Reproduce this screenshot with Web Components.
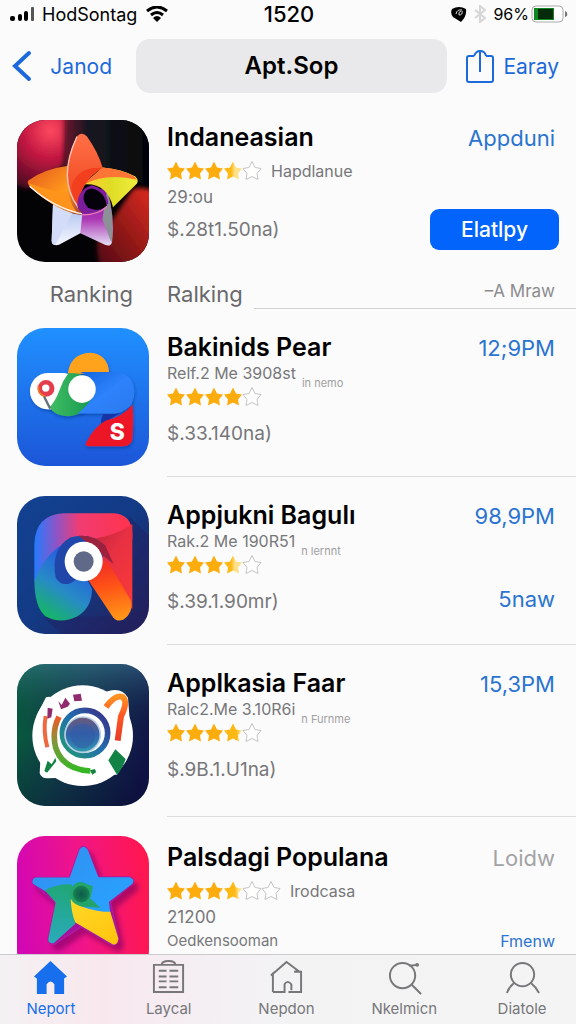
<!DOCTYPE html>
<html lang="id">
<head>
<meta charset="utf-8">
<meta name="viewport" content="width=device-width, initial-scale=1">
<title>Apt.Sop</title>
<style>
    body {
        margin: 0;
        background: #fbfbfb;
        color: #000;
        font-family: Inter, "Liberation Sans", sans-serif;
    }
</style>
</head>
<body>
<store-screen>
    <status-bar slot="top" carrier="HodSontag" time="1520" battery="96%"></status-bar>
    <nav-header slot="top" back="Janod" action="Earay">Apt.Sop</nav-header>

    <app-row featured art="flower" heading="Indaneasian" rating="3.5" maker="Hapdlanue" note="29:ou" price="$.28t1.50na)">
        <a slot="link" href="#detail">Appduni</a>
        <button slot="action" class="fill" type="button">Elatlpy</button>
    </app-row>
    <section-head label="Ranking" more="–A Mraw">Ralking</section-head>
    <app-row short art="ribbon" heading="Bakinids Pear" rating="4" detail="Relf.2 Me 3908st" tag="in nemo" price="$.33.140na)">
        <a slot="link" href="#pear">12;9PM</a>
    </app-row>
    <app-row short art="loop" heading="Appjukni Bagulı" rating="3.5" detail="Rak.2 Me 190R51" tag="n lernnt" price="$.39.1.90mr)">
        <a slot="link" href="#bagul">98,9PM</a>
        <a slot="action" href="#more">5naw</a>
    </app-row>
    <app-row art="lens" heading="Applkasia Faar" rating="3.8" detail="Ralc2.Me 3.10R6i" tag="n Furnme" price="$.9B.1.U1na)">
        <a slot="link" href="#faar">15,3PM</a>
    </app-row>
    <app-row featured last art="star" heading="Palsdagi Populana" rating="3.7" stars="6" maker="Irodcasa" note="21200" price="Oedkensooman">
        <a slot="link" class="muted" href="#populana">Loidw</a>
        <a slot="action" class="small" href="#all">Fmenw</a>
    </app-row>

    <tab-bar slot="bottom">
        <tab-item icon="home" active>Neport</tab-item>
        <tab-item icon="list">Laycal</tab-item>
        <tab-item icon="house">Nepdon</tab-item>
        <tab-item icon="search">Nkelmicn</tab-item>
        <tab-item icon="person">Diatole</tab-item>
    </tab-bar>
</store-screen>

<script>
const ART = {
    flower: /*html*/ `
        <svg viewBox="50 42 396 427" preserveAspectRatio="xMidYMid slice" aria-hidden="true">
            <defs>
                <radialGradient id="glow" gradientUnits="userSpaceOnUse" cx="150" cy="75" r="190">
                    <stop offset="0" stop-color="#ff4a60"/><stop offset=".45" stop-color="#c01540"/>
                    <stop offset="1" stop-color="#450c20"/>
                </radialGradient>
                <linearGradient id="night" x1="0" y1="0" x2="1" y2="0">
                    <stop offset="0" stop-color="#70182c"/><stop offset=".25" stop-color="#171922"/><stop offset="1" stop-color="#020205"/>
                </linearGradient>
                <linearGradient id="ember" x1="1" y1="0" x2="0" y2="1">
                    <stop offset="0" stop-color="#e52c20"/><stop offset="1" stop-color="#4b0811"/>
                </linearGradient>
                <linearGradient id="top" x1="0" y1="0" x2="0" y2="1">
                    <stop offset="0" stop-color="#ff7048"/><stop offset="1" stop-color="#ee421d"/>
                </linearGradient>
                <linearGradient id="left" x1="0" y1="0" x2="1" y2="1">
                    <stop offset="0" stop-color="#e5561f"/><stop offset=".6" stop-color="#ff9b1c"/><stop offset="1" stop-color="#9a3b35"/>
                </linearGradient>
                <linearGradient id="right" x1="0" y1="0" x2="1" y2="0">
                    <stop offset="0" stop-color="#ffce35"/><stop offset=".5" stop-color="#dfdc25"/><stop offset="1" stop-color="#f0ee3d"/>
                </linearGradient>
                <linearGradient id="foot" x1="0" y1="0" x2="0" y2="1">
                    <stop offset="0" stop-color="#a7bcec"/><stop offset="1" stop-color="#f6f7ff"/>
                </linearGradient>
                <linearGradient id="violet" x1="0" y1="0" x2="0" y2="1">
                    <stop offset="0" stop-color="#7b189b"/><stop offset=".55" stop-color="#ac35b4"/><stop offset="1" stop-color="#e4e0f5"/>
                </linearGradient>
                <filter id="soft"><feGaussianBlur stdDeviation="7"/></filter>
            </defs>
            <rect x="50" y="42" width="396" height="427" fill="#030306"/>
            <path d="M30 20H215Q200 120 190 180L80 250Q60 240 30 232Z" fill="url(#glow)" filter="url(#soft)"/>
            <path d="M192 20H470V265Q410 215 300 190L190 185Z" fill="url(#night)" filter="url(#soft)"/>
            <path d="M470 260Q430 240 398 250L290 410Q290 450 300 490H470Z" fill="url(#ember)" filter="url(#soft)"/>
            <path d="M158 292Q200 325 246 326L270 366 240 382 176 417Q155 422 154 405Z" fill="url(#foot)"/>
            <path d="M218 318Q190 370 165 416Q155 420 154 405L158 292Z" fill="#d3ddfa"/>
            <path d="M84 224Q130 190 204 180L236 268 246 327Q180 323 90 244Q78 230 84 224Z" fill="url(#left)"/>
            <path d="M86 232Q135 252 206 262Q210 300 236 325Q150 305 88 241Z" fill="#ff941d"/>
            <path d="M88 241Q160 306 246 324" fill="none" stroke="#fff3f2" stroke-width="4"/>
            <path d="M250 285L318 240Q345 330 335 410Q330 424 314 417L240 382Z" fill="url(#violet)"/>
            <path d="M320 255Q345 330 334 411Q325 390 306 340Z" fill="#8d9096"/>
            <path d="M306 185Q365 190 405 212Q416 222 410 233L338 304Q320 230 250 236Z" fill="url(#right)"/>
            <path d="M250 236Q320 200 410 222L402 212Q360 188 306 185Z" fill="#ff7535"/>
            <path d="M232 90Q245 76 260 92Q294 140 307 186Q240 225 232 304Q200 265 201 210Q200 145 232 90Z" fill="url(#top)"/>
            <path d="M213 242Q230 180 307 186Q240 225 232 304Q218 280 213 242Z" fill="#f2401f"/>
            <path d="M230 92Q170 220 234 305" fill="none" stroke="#ffc8b8" stroke-width="4"/>
            <path d="M231 300Q230 250 276 238Q320 250 324 292Q300 329 256 325Q236 320 231 300Z" fill="#7c1d9b"/>
            <path d="M276 248Q314 258 319 300Q298 321 263 306Q239 280 257 255Q266 248 276 248Z" fill="#05020b"/>
            <path d="M244 327Q292 328 320 302" fill="none" stroke="#ed7bbb" stroke-width="4"/>
        </svg>`,
    ribbon: /*html*/ `
        <svg viewBox="50 24 396 411" preserveAspectRatio="xMidYMid slice" aria-hidden="true">
            <defs>
                <linearGradient id="sky" x1="0" y1="0" x2="0" y2="1">
                    <stop offset="0" stop-color="#2090ff"/><stop offset="1" stop-color="#1c56d8"/>
                </linearGradient>
                <linearGradient id="leaf" x1="0" y1="0" x2="1" y2="0">
                    <stop offset="0" stop-color="#3fbd63"/><stop offset="1" stop-color="#16984f"/>
                </linearGradient>
                <linearGradient id="pill" x1="0" y1="0" x2="1" y2="1">
                    <stop offset="0" stop-color="#1264dc"/><stop offset=".5" stop-color="#2d82fb"/><stop offset="1" stop-color="#2c79ed"/>
                </linearGradient>
                <filter id="drop" x="-20%" y="-20%" width="140%" height="150%">
                    <feDropShadow dx="2" dy="6" stdDeviation="5" flood-color="#082b7e" flood-opacity=".45"/>
                </filter>
            </defs>
            <rect x="50" y="24" width="396" height="411" fill="url(#sky)"/>
            <path d="M202 172Q204 101 270 98Q322 102 326 158L240 160 202 184Z" fill="#ffa31c" filter="url(#drop)"/>
            <rect x="90" y="158" width="150" height="108" rx="54" fill="#fff" filter="url(#drop)"/>
            <path d="M205 158L240 160 280 235Q255 287 200 287 162 284 148 260 165 245 180 205Q188 180 205 158Z" fill="url(#leaf)" filter="url(#drop)"/>
            <path d="M240 155H342Q400 158 401 216Q398 275 340 279H232Q290 235 278 190 265 164 240 155Z" fill="url(#pill)" filter="url(#drop)"/>
            <path d="M308 280H345Q370 276 390 258L302 312Q300 297 308 280Z" fill="#1833a5"/>
            <path d="M396 252Q399 310 395 355Q392 374 370 376H262Q252 374 257 366Q280 318 315 300 365 290 396 252Z" fill="#ed1927" filter="url(#drop)"/>
            <circle cx="245" cy="206" r="41" fill="#fff"/>
            <circle cx="138" cy="204" r="25" fill="#e43d4e"/>
            <path d="M115 195Q112 223 135 228" fill="none" stroke="#f07a25" stroke-width="5"/>
            <circle cx="137" cy="203" r="11" fill="#fff"/>
            <path d="M132 228L150 264" stroke="#66717b" stroke-width="7"/>
            <text x="350" y="357" text-anchor="middle" font-size="68" font-weight="800" fill="#fff">S</text>
        </svg>`,
    loop: /*html*/ `
        <svg viewBox="50 29 396 417" preserveAspectRatio="xMidYMid slice" aria-hidden="true">
            <defs>
                <linearGradient id="navy" x1="0" y1="0" x2="1" y2="1">
                    <stop offset="0" stop-color="#124292"/><stop offset=".5" stop-color="#133a85"/><stop offset="1" stop-color="#251e57"/>
                </linearGradient>
                <linearGradient id="hot" x1="0" y1="0" x2="1" y2="0">
                    <stop offset="0" stop-color="#247bff"/><stop offset=".22" stop-color="#8b55c9"/>
                    <stop offset=".46" stop-color="#f13c72"/><stop offset="1" stop-color="#ff334b"/>
                </linearGradient>
                <linearGradient id="sea" gradientUnits="userSpaceOnUse" x1="125" y1="390" x2="230" y2="230">
                    <stop offset="0" stop-color="#14b85f"/><stop offset=".5" stop-color="#288bc5"/><stop offset="1" stop-color="#2460df"/>
                </linearGradient>
                <linearGradient id="fire" gradientUnits="userSpaceOnUse" x1="320" y1="240" x2="350" y2="400">
                    <stop offset="0" stop-color="#f43324"/><stop offset=".4" stop-color="#ff5516"/><stop offset="1" stop-color="#ff9718"/>
                </linearGradient>
                <linearGradient id="side" x1="0" y1="0" x2="1" y2="1">
                    <stop offset="0" stop-color="#a61e38"/><stop offset=".5" stop-color="#e73043"/><stop offset="1" stop-color="#fb3a35"/>
                </linearGradient>
            </defs>
            <rect x="50" y="29" width="396" height="417" fill="url(#navy)"/>
            <path d="M385 90L446 150V446H185L130 395 392 390Z" fill="#241f60" opacity=".4"/>
            <path d="M102 285V175Q105 86 190 82H340Q394 86 396 142V160L220 180Q170 240 150 285Z" fill="url(#hot)"/>
            <path d="M220 165Q330 160 396 115V370L300 260 285 180Z" fill="url(#side)"/>
            <path d="M102 285Q135 200 205 165L275 310Q275 365 230 392 180 416 135 391 103 365 102 285Z" fill="url(#sea)"/>
            <path d="M166 275Q150 190 210 155 270 138 315 180L300 240 210 292Q180 302 166 275Z" fill="#2046aa"/>
            <path d="M235 150Q280 145 315 180L340 235 285 190Z" fill="#9d213c"/>
            <path d="M262 280L310 224Q320 226 328 237L392 345Q400 380 370 401 350 410 338 394Z" fill="url(#fire)"/>
            <ellipse cx="250" cy="227" rx="57" ry="59" fill="#fff"/>
            <ellipse cx="250" cy="227" rx="30" ry="31" fill="#606a88"/>
        </svg>`,
    lens: /*html*/ `
        <svg viewBox="50 22 396 430" preserveAspectRatio="xMidYMid slice" aria-hidden="true">
            <defs>
                <linearGradient id="deep" x1="0" y1=".3" x2="1" y2=".6">
                    <stop offset="0" stop-color="#075d3c"/><stop offset=".45" stop-color="#123c4d"/><stop offset="1" stop-color="#111348"/>
                </linearGradient>
                <linearGradient id="shade" x1="0" y1="0" x2="0" y2="1">
                    <stop offset="0" stop-color="#427d9d" stop-opacity=".5"/><stop offset=".5" stop-color="#081030" stop-opacity="0"/>
                    <stop offset="1" stop-color="#020b20" stop-opacity=".3"/>
                </linearGradient>
                <linearGradient id="ring" x1="0" y1="1" x2="1" y2="0">
                    <stop offset="0" stop-color="#239c70"/><stop offset=".5" stop-color="#216fae"/><stop offset="1" stop-color="#3b2a87"/>
                </linearGradient>
                <linearGradient id="glass" x1="0" y1="0" x2="0" y2="1">
                    <stop offset="0" stop-color="#6e5879"/><stop offset=".5" stop-color="#3164ae"/><stop offset="1" stop-color="#2f9caf"/>
                </linearGradient>
                <linearGradient id="sweep" x1="0" y1="0" x2="0" y2="1">
                    <stop offset="0" stop-color="#f05924"/><stop offset=".5" stop-color="#7b993b"/><stop offset="1" stop-color="#35b724"/>
                </linearGradient>
                <linearGradient id="hook" x1="0" y1="0" x2="0" y2="1">
                    <stop offset="0" stop-color="#ff9322"/><stop offset=".4" stop-color="#ff5b25"/><stop offset="1" stop-color="#e63c28"/>
                </linearGradient>
            </defs>
            <rect x="50" y="22" width="396" height="430" fill="url(#deep)"/>
            <rect x="50" y="22" width="396" height="430" fill="url(#shade)"/>
            <circle cx="247" cy="239" r="151" fill="#fff"/>
            <path d="M108 180L137 124Q150 118 170 130ZM120 315L118 352Q123 368 143 367L190 365ZM300 115Q360 85 383 125L388 190ZM300 372Q311 355 350 356L375 315Z" fill="#fff"/>
            <path d="M176 182Q154 225 166 275 187 340 270 345" fill="none" stroke="url(#sweep)" stroke-width="17"/>
            <circle cx="254" cy="231" r="68" fill="none" stroke="url(#ring)" stroke-width="17"/>
            <circle cx="247" cy="236" r="53" fill="url(#glass)" stroke="#b9cfe4" stroke-width="5"/>
            <circle cx="247" cy="240" r="37" fill="#3159a5" opacity=".55"/>
            <path d="M317 153Q344 115 367 123 384 138 362 181L352 254" fill="none" stroke="url(#hook)" stroke-width="18"/>
            <path d="M136 180Q128 225 141 274" fill="none" stroke="#ee6840" stroke-width="12"/>
            <path d="M142 155L157 158 153 184 141 188ZM174 135L184 147 195 125 209 143 202 152 182 160ZM218 116L241 113 245 134 222 136Z" fill="#912b70"/>
            <path d="M324 313L345 280 376 309Q365 340 350 356ZM132 345L142 314 154 325 165 305 168 316 140 350Z" fill="#138345"/>
            <path d="M269 343L283 339 288 348 276 356Z" fill="#138345"/>
        </svg>`,
    star: /*html*/ `
        <svg viewBox="50 42 396 427" preserveAspectRatio="xMidYMid slice" aria-hidden="true">
            <defs>
                <linearGradient id="pink" x1="0" y1=".5" x2="1" y2=".4">
                    <stop offset="0" stop-color="#d207b5"/><stop offset=".5" stop-color="#f11586"/><stop offset="1" stop-color="#ff174f"/>
                </linearGradient>
                <linearGradient id="azure" x1="0" y1="0" x2="1" y2="1">
                    <stop offset="0" stop-color="#338df0"/><stop offset="1" stop-color="#27a5ff"/>
                </linearGradient>
                <linearGradient id="teal" x1="0" y1="0" x2="0" y2="1">
                    <stop offset="0" stop-color="#20a676"/><stop offset="1" stop-color="#2aabbc"/>
                </linearGradient>
                <linearGradient id="sun" x1="0" y1="0" x2="1" y2="1">
                    <stop offset="0" stop-color="#ffd927"/><stop offset="1" stop-color="#ffc30d"/>
                </linearGradient>
                <radialGradient id="hole"><stop offset="0" stop-color="#0d5948"/><stop offset="1" stop-color="#178254"/></radialGradient>
                <filter id="cast" x="-20%" y="-20%" width="150%" height="150%">
                    <feDropShadow dx="14" dy="18" stdDeviation="8" flood-color="#7b0064" flood-opacity=".6"/>
                </filter>
            </defs>
            <rect x="50" y="42" width="396" height="427" fill="url(#pink)"/>
            <path d="M238 82Q250 66 262 84L294 166H388Q405 172 396 186L330 240 354 350Q353 370 336 369L242 315 162 367Q142 365 144 350L166 242 98 186Q92 172 106 167H208Z" fill="#a8109f" filter="url(#cast)" stroke="#aa1aa0" stroke-width="5"/>
            <path d="M238 82Q250 66 262 84L294 166H388Q405 172 396 186L326 240 330 275 225 265 170 230 98 186Q92 172 106 167H208Z" fill="url(#azure)"/>
            <path d="M133 205Q175 185 215 188L215 250 225 306 160 364Q142 365 144 350L166 242Z" fill="url(#teal)"/>
            <path d="M208 210Q220 178 246 181L278 194 270 230 300 258 240 254 215 262Z" fill="#22a46a"/>
            <circle cx="243" cy="217" r="25" fill="url(#hole)"/>
            <path d="M211 230Q220 250 250 256 290 270 330 270L354 350Q353 370 338 368L225 302Q213 275 211 230Z" fill="url(#sun)"/>
        </svg>`
};

const TAB_ICONS = {
    home: `<path d="M1 17L18 1 35 17 32 19V35H22V25Q18 19 14 25V35H4V19Z" fill="currentColor"/>`,
    list: `<path d="M3 5H33V33H3ZM11 5Q11 1 18 1 25 1 25 5M8 11H16M19 11H28M8 17H16M19 17H28M8 22H16M19 22H28M8 28H16M19 28H28"/>`,
    house: `<path d="M4 33V14L2 16 18 2 30 11 26 12H33V33H20M4 33H16V25Q19 20 23 25V31"/>`,
    search: `<circle cx="16" cy="16" r="13"/><path d="M25 25L35 35M23 6L31 5"/><circle cx="31" cy="5" r="1"/>`,
    person: `<circle cx="18" cy="15" r="12"/><path d="M9 24Q4 28 2 34M27 24Q32 28 35 34"/>`
};

class StoreScreen extends HTMLElement {
    constructor() {
        super();
        this.attachShadow({ mode: "open" });

        const html = /*html*/ `
            <header><slot name="top"></slot></header>
            <main><slot></slot></main>
            <slot name="bottom"></slot>
        `;

        const css = /*css*/ `
            :host {
                display: flex;
                flex-direction: column;
                height: 100vh;
                overflow: hidden;
            }

            main {
                flex: 1;
                min-height: 0;
                overflow: hidden;
            }
        `;

        this.shadowRoot.innerHTML = html + `<style>${css}</style>`;
    }
}

class StatusBar extends HTMLElement {
    constructor() {
        super();
        this.attachShadow({ mode: "open" });

        const html = /*html*/ `
            <div class="side">
                <svg width="26" height="14" viewBox="0 0 26 14" aria-hidden="true">
                    <rect y="9" width="5" height="5" rx="2"/><rect x="8" y="7" width="4" height="7" rx="2"/>
                    <rect x="14" y="4" width="4" height="10" rx="2"/><rect x="21" width="3" height="14" rx="1" fill="#555"/>
                </svg>
                <span>${this.getAttribute("carrier")}</span>
                <svg class="wifi" width="22" height="16" viewBox="0 0 22 16" aria-hidden="true">
                    <path d="M1 5Q11-3 21 5M5 9Q11 4 17 9" fill="none" stroke="#000" stroke-width="3"/>
                    <path d="M7 12Q11 8 15 12L11 16Z"/>
                </svg>
            </div>
            <time>${this.getAttribute("time")}</time>
            <div class="side end">
                <svg width="16" height="16" viewBox="0 0 16 16" aria-hidden="true">
                    <path d="M1 3Q8-1 15 3 16 10 10 16L2 11Q-1 7 1 3Z"/>
                    <path d="M5 8Q6 3 11 4M11 5Q12 9 8 9 7 6 10 5" fill="none" stroke="#ddd"/>
                </svg>
                <svg class="tooth" width="12" height="18" viewBox="0 0 12 18" aria-hidden="true">
                    <path d="M1 5L11 13 6 17V1L11 5 1 13" fill="none" stroke="#d6d6d6" stroke-width="2"/>
                </svg>
                <span class="battery">${this.getAttribute("battery")}</span>
                <svg width="37" height="18" viewBox="0 0 37 18" aria-hidden="true">
                    <rect x="1" y="1" width="31" height="16" rx="4" fill="#fff" stroke="#aaa"/>
                    <rect x="3" y="3" width="20" height="12" fill="#0c861e"/><rect x="7" y="4" width="15" height="10" fill="#052b0a"/>
                    <path d="M34 6Q37 7 36 11L34 12Z" fill="#777"/>
                </svg>
            </div>
        `;

        const css = /*css*/ `
            :host {
                display: grid;
                grid-template-columns: 1fr auto 1fr;
                align-items: center;
                height: 28px;
                padding: 0 8px 0 10px;
                font-size: 18px;
            }

            .side {
                display: flex;
                align-items: center;
                gap: 6px;
            }

            .end {
                justify-content: flex-end;
                gap: 2px;
            }

            .wifi {
                margin-left: 3px;
            }

            .tooth {
                margin: 0 5px;
            }

            .battery {
                font-size: 16px;
            }

            time {
                font-size: 22px;
                font-weight: 500;
            }
        `;

        this.shadowRoot.innerHTML = html + `<style>${css}</style>`;
    }
}

class NavHeader extends HTMLElement {
    constructor() {
        super();
        this.attachShadow({ mode: "open" });

        const html = /*html*/ `
            <a href="#back">
                <svg width="20" height="32" viewBox="0 0 20 32" aria-hidden="true">
                    <path d="M17 3L3 16 17 29" fill="none" stroke="currentColor" stroke-width="4" stroke-linecap="round"/>
                </svg>
                ${this.getAttribute("back")}
            </a>
            <h1><slot></slot></h1>
            <button type="button">
                <svg width="28" height="34" viewBox="0 0 28 34" aria-hidden="true">
                    <path d="M8 7H3Q1 7 1 9V31Q1 33 3 33H25Q27 33 27 31V9Q27 7 25 7H20M8 7Q10 2 14 2 19 2 20 7M14 2V23" fill="none" stroke="currentColor" stroke-width="2"/>
                </svg>
                ${this.getAttribute("action")}
            </button>
        `;

        const css = /*css*/ `
            :host {
                display: grid;
                grid-template-columns: 110px 1fr 98px;
                align-items: center;
                padding: 11px 17px 0 12px;
                column-gap: 14px;
                font-size: 21px;
            }

            a, button {
                display: flex;
                align-items: center;
                justify-content: space-between;
                padding: 0;
                border: none;
                background: none;
                color: #1c69dc;
                font: inherit;
                text-decoration: none;
            }

            a {
                padding-right: 10px;
            }

            button {
                padding-left: 5px;
                gap: 8px;
                cursor: pointer;
            }

            svg {
                flex: none;
            }

            h1 {
                margin: 0;
                border-radius: 14px;
                background: #e9e9eb;
                font-size: 24px;
                font-weight: 600;
                line-height: 54px;
                text-align: center;
            }
        `;

        this.shadowRoot.innerHTML = html + `<style>${css}</style>`;
    }
}

class StarRating extends HTMLElement {
    constructor() {
        super();
        this.attachShadow({ mode: "open" });

        const value = Number(this.getAttribute("value"));
        const max = Number(this.getAttribute("max") || 5);
        const path = "M9 0L12 6 18 7 14 12 15 18 9 15 3 18 4 12 0 7 6 6Z";

        let stars = "";
        for (let i = 0; i < max; i++) {
            const part = Math.max(0, Math.min(1, value - i));
            if (part === 0) {
                stars += `<svg viewBox="0 0 18 19"><path d="${path}" fill="#fff" stroke="#c4c4c6"/></svg>`;
            } else if (part === 1) {
                stars += `<svg viewBox="0 0 18 19"><path d="${path}" fill="#fdac0d"/></svg>`;
            } else {
                stars += `
                    <svg viewBox="0 0 18 19">
                        <linearGradient id="part">
                            <stop offset="${part - 0.1}" stop-color="#fdb813"/>
                            <stop offset="${part + 0.1}" stop-color="#fde08a"/>
                        </linearGradient>
                        <path d="${path}" fill="url(#part)"/>
                    </svg>`;
            }
        }

        const css = /*css*/ `
            :host {
                display: flex;
                gap: 1px;
            }

            svg {
                width: 18px;
                height: 20px;
                overflow: visible;
            }
        `;

        this.setAttribute("role", "img");
        this.setAttribute("aria-label", `${value} / ${max}`);
        this.shadowRoot.innerHTML = stars + `<style>${css}</style>`;
    }
}

class AppArt extends HTMLElement {
    constructor() {
        super();
        this.attachShadow({ mode: "open" });

        const css = /*css*/ `
            :host {
                display: block;
                overflow: hidden;
                border-radius: 28px;
            }

            svg {
                display: block;
                width: 100%;
                height: 100%;
            }
        `;

        this.shadowRoot.innerHTML = ART[this.getAttribute("name")] + `<style>${css}</style>`;
    }
}

class AppRow extends HTMLElement {
    constructor() {
        super();
        this.attachShadow({ mode: "open" });

        const get = (name) => this.getAttribute(name) || "";
        const rating = `<star-rating value="${get("rating")}" max="${get("stars") || 5}"></star-rating>`;

        const middle = this.hasAttribute("featured")
            ? `<div class="line">${rating}<span class="maker">${get("maker")}</span></div><p class="note">${get("note")}</p>`
            : `<p class="detail">${get("detail")}<small>${get("tag")}</small></p>${rating}`;

        const html = /*html*/ `
            <app-art name="${get("art")}"></app-art>
            <div class="body">
                <div class="info">
                    <h2>${get("heading")}</h2>
                    ${middle}
                    <p class="price">${get("price")}</p>
                </div>
                <div class="aside">
                    <slot name="link"></slot>
                    <slot name="action"></slot>
                </div>
            </div>
        `;

        const css = /*css*/ `
            :host {
                display: grid;
                grid-template-columns: 132px 1fr;
                column-gap: 18px;
                padding-left: 17px;
                color: #77777a;
            }

            app-art {
                height: 142px;
                margin: 19px 0 11px;
            }

            :host([short]) app-art {
                height: 138px;
            }

            :host([art="flower"]) app-art {
                margin: 27px 0 10px;
            }

            .body {
                display: flex;
                justify-content: space-between;
                padding: 22px 17px 0 0;
                border-bottom: 1px solid #dededf;
            }

            :host([art="flower"]) .body {
                padding-top: 28px;
                border: none;
            }

            :host([last]) .body {
                padding-top: 24px;
                border: none;
            }

            h2, p {
                margin: 0;
                white-space: nowrap;
            }

            h2 {
                color: #000;
                font-size: 25px;
                font-weight: 600;
                line-height: 32px;
            }

            .line {
                display: flex;
                align-items: center;
                gap: 10px;
                margin-top: 8px;
            }

            .maker, .detail {
                font-size: 16px;
                line-height: 20px;
            }

            .note {
                margin-top: 6px;
                font-size: 17px;
                line-height: 20px;
            }

            .detail {
                margin-bottom: 2px;
            }

            small {
                position: relative;
                top: 8px;
                margin-left: 6px;
                color: #a0a0a2;
                font-size: 11px;
            }

            .price {
                margin-top: 15px;
                font-size: 19px;
                line-height: 24px;
            }

            :host([featured]) .price {
                margin-top: 11px;
            }

            :host([last]) .price {
                margin-top: 2px;
                font-size: 15px;
            }

            .aside {
                display: flex;
                flex-direction: column;
                align-items: flex-end;
            }

            ::slotted(a) {
                padding: 3px 4px 0 0;
                color: #2b74cf;
                font-size: 22px;
                line-height: 28px;
                text-decoration: none;
            }

            ::slotted(a[slot="action"]) {
                margin-top: 52px;
            }

            ::slotted(a.muted) {
                color: #a3a3a6;
            }

            ::slotted(a.small) {
                font-size: 16px;
            }

            ::slotted(.fill) {
                width: 129px;
                height: 41px;
                margin-top: 57px;
                border: none;
                border-radius: 9px;
                background: #0264fb;
                color: #fff;
                font: 500 21px Inter, "Liberation Sans", sans-serif;
                cursor: pointer;
            }
        `;

        this.shadowRoot.innerHTML = html + `<style>${css}</style>`;
    }
}

class SectionHead extends HTMLElement {
    constructor() {
        super();
        this.attachShadow({ mode: "open" });

        const html = /*html*/ `
            <span class="label">${this.getAttribute("label")}</span>
            <h3><slot></slot></h3>
            <div><a href="#ranking">${this.getAttribute("more")}</a></div>
        `;

        const css = /*css*/ `
            :host {
                display: grid;
                grid-template-columns: 133px auto 1fr;
                grid-template-rows: 37px;
                color: #68686b;
                font-size: 22px;
                line-height: 44px;
            }

            .label {
                text-align: right;
            }

            h3 {
                margin: 0 11px 0 34px;
                font: inherit;
            }

            div {
                padding-right: 21px;
                border-bottom: 1px solid #d2d2d3;
                text-align: right;
            }

            a {
                color: #8c8c8f;
                font-size: 17px;
                line-height: 38px;
                text-decoration: none;
                vertical-align: top;
            }
        `;

        this.shadowRoot.innerHTML = html + `<style>${css}</style>`;
    }
}

class TabBar extends HTMLElement {
    constructor() {
        super();
        this.attachShadow({ mode: "open" });

        const css = /*css*/ `
            :host {
                display: block;
                border-top: 1px solid #cbcbcd;
                background: linear-gradient(90deg, #f4f1f3, #f8e8ee 18%, #f4eff3 36%, #f3f3f4 50%, #f4f4f5);
            }

            nav {
                display: grid;
                grid-template-columns: repeat(5, 1fr);
                padding: 5px 0;
                margin: 0 -5px 0 -8px;
            }
        `;

        this.shadowRoot.innerHTML = `<nav><slot></slot></nav><style>${css}</style>`;
    }
}

class TabItem extends HTMLElement {
    constructor() {
        super();
        this.attachShadow({ mode: "open" });

        const html = /*html*/ `
            <a href="#tab">
                <svg viewBox="0 0 36 36" aria-hidden="true">${TAB_ICONS[this.getAttribute("icon")]}</svg>
                <slot></slot>
            </a>
        `;

        const css = /*css*/ `
            :host {
                display: block;
                color: #77777a;
            }

            :host([active]) {
                color: #176fed;
            }

            a {
                display: flex;
                flex-direction: column;
                align-items: center;
                gap: 4px;
                color: inherit;
                font-size: 15px;
                line-height: 20px;
                text-decoration: none;
            }

            svg {
                width: 35px;
                height: 35px;
                fill: none;
                stroke: currentColor;
                stroke-width: 2;
            }

            :host([active]) svg {
                stroke: none;
            }
        `;

        this.shadowRoot.innerHTML = html + `<style>${css}</style>`;
    }
}

customElements.define("store-screen", StoreScreen);
customElements.define("status-bar", StatusBar);
customElements.define("nav-header", NavHeader);
customElements.define("star-rating", StarRating);
customElements.define("app-art", AppArt);
customElements.define("app-row", AppRow);
customElements.define("section-head", SectionHead);
customElements.define("tab-bar", TabBar);
customElements.define("tab-item", TabItem);
</script>
</body>
</html>
